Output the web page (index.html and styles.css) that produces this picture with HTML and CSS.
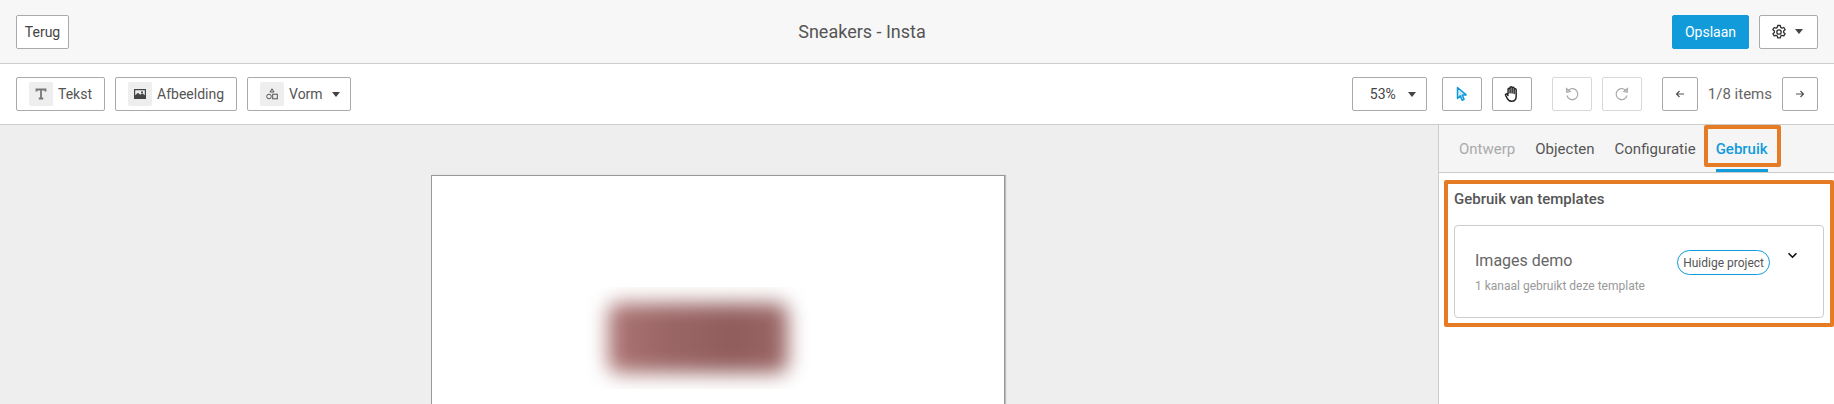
FILE: index.html
```html
<!DOCTYPE html>
<html lang="nl">
<head>
  <meta charset="UTF-8">
  <title>Sneakers - Insta</title>
  <link rel="stylesheet" href="styles.css">
</head>
<body>
  <header class="topbar">
    <button class="btn btn-back">Terug</button>
    <div class="page-title">Sneakers - Insta</div>
    <div class="topbar-right">
      <button class="btn btn-primary">Opslaan</button>
      <button class="btn btn-settings">
        <svg class="icon" width="16" height="16" viewBox="0 0 16 16" fill="none" stroke="#333" stroke-width="1.300" stroke-linejoin="round"><path d="M6.700 1.500h2.600l.4 1.900 1.200.7 1.900-.6 1.300 2.200-1.500 1.300v1.400l1.500 1.300-1.300 2.200-1.900-.6-1.200.7-.4 1.900H6.700l-.4-1.900-1.200-.7-1.900.6-1.300-2.200 1.500-1.300V7L1.900 5.700l1.300-2.200 1.900.6 1.200-.7z"/><circle cx="8" cy="8" r="2.200"/></svg>
        <span class="caret"></span>
      </button>
    </div>
  </header>

  <div class="toolbar">
    <div class="tool-group">
      <button class="btn btn-tool">
        <span class="tool-icon"><svg width="12" height="12" viewBox="0 0 12 12" fill="none" stroke="#777" stroke-width="1.800"><path d="M1.500 3.500V1.500h9v2M6 1.500v9M3.800 10.500h4.400"/></svg></span>Tekst
      </button>
      <button class="btn btn-tool">
        <span class="tool-icon"><svg width="12" height="12" viewBox="0 0 12 12"><path fill="#444" fill-rule="evenodd" d="M0 1h12v10H0zM1.200 2.200v5l2.800-2.400 2.200 2 2-1.600 2.600 2V2.200zM8 3.200a1 1 0 1 1 0 2 1 1 0 0 1 0-2z"/></svg></span>Afbeelding
      </button>
      <button class="btn btn-tool btn-tool-menu">
        <span class="tool-icon"><svg width="12" height="12" viewBox="0 0 12 12" fill="none" stroke="#555" stroke-width="1"><path d="M6 .8l2 3.200H4z"/><circle cx="3" cy="8.500" r="2.300"/><rect x="6.700" y="6.200" width="4.600" height="4.600"/></svg></span>Vorm<span class="caret caret-gap"></span>
      </button>
    </div>
    <div class="tool-group">
      <button class="btn btn-zoom">53%<span class="caret"></span></button>
      <button class="btn btn-square gap-small">
        <svg width="14" height="16" viewBox="0 0 14 16" fill="#cfeaf7" stroke="#129bdb" stroke-width="1.500" stroke-linejoin="round"><path d="M2.500 1.500v11l2.800-2.600 1.800 4.300 2-.9-1.800-4.200 3.900-.2z"/></svg>
      </button>
      <button class="btn btn-square">
        <svg width="18" height="18" viewBox="0 0 16 16" fill="none" stroke="#222" stroke-width="1.300" stroke-linecap="round" stroke-linejoin="round"><path d="M4.500 8V3.800a.9.900 0 0 1 1.800 0V7M6.300 7V2.500a.9.900 0 0 1 1.800 0V7M8.100 7V2.800a.9.900 0 0 1 1.800 0V7M9.900 7.500V4.200a.9.900 0 0 1 1.800 0V10c0 2.800-1.600 4.500-4 4.500-2 0-3-1-3.800-2.400L2.300 9.200c-.5-1 .8-1.800 1.500-.9l.7 1"/></svg>
      </button>
      <button class="btn btn-square btn-disabled gap-large">
        <svg width="16" height="16" viewBox="0 0 16 16" fill="none" stroke="#aaa" stroke-width="1.200"><path d="M4.500 4.200A5.500 5.500 0 1 1 3 9.500"/><path fill="#ddd" d="M2.500 2.500l.3 3.800 3.400-.8z"/></svg>
      </button>
      <button class="btn btn-square btn-disabled">
        <svg width="16" height="16" viewBox="0 0 16 16" fill="none" stroke="#aaa" stroke-width="1.200"><path d="M11.500 4.200A5.500 5.500 0 1 0 13 9.500"/><path fill="#ddd" d="M13.500 2.500l-.3 3.800-3.400-.8z"/></svg>
      </button>
      <button class="btn btn-arrow gap-large">
        <svg width="10" height="10" viewBox="0 0 10 10" fill="none" stroke="#555" stroke-width="1.200"><path d="M9 5H1.500M4.500 2l-3 3 3 3"/></svg>
      </button>
      <span class="item-count">1/8 items</span>
      <button class="btn btn-arrow">
        <svg width="10" height="10" viewBox="0 0 10 10" fill="none" stroke="#555" stroke-width="1.200"><path d="M1 5h7.500M5.500 2l3 3-3 3"/></svg>
      </button>
    </div>
  </div>

  <main class="workspace">
    <div class="canvas-area">
      <div class="canvas">
        <div class="blur-box">
          <div class="blur-shape"></div>
        </div>
      </div>
    </div>
    <aside class="panel">
      <nav class="tabs">
        <span class="tab tab-muted">Ontwerp</span>
        <span class="tab">Objecten</span>
        <span class="tab">Configuratie</span>
        <span class="tab tab-active">Gebruik</span>
      </nav>
      <section class="usage">
        <h2 class="usage-title">Gebruik van templates</h2>
        <div class="usage-card">
          <div class="usage-info">
            <div class="usage-name">Images demo</div>
            <div class="usage-sub">1 kanaal gebruikt deze template</div>
          </div>
          <span class="pill">Huidige project</span>
          <svg class="chevron" width="11" height="7" viewBox="0 0 12 8" fill="none" stroke="#111" stroke-width="1.800"><path d="M1.500 1.500L6 6l4.500-4.500"/></svg>
        </div>
      </section>
      <div class="highlight highlight-tab"></div>
      <div class="highlight highlight-usage"></div>
    </aside>
  </main>
</body>
</html>
```

FILE: styles.css
```css
* { margin:0; padding:0; box-sizing:border-box; }
html, body { height:100%; overflow:hidden; }
body {
  font-family: Roboto, "Liberation Sans", sans-serif;
  font-size:14px;
  color:#555;
  background:#fff;
  display:flex;
  flex-direction:column;
}

.btn {
  display:inline-flex; align-items:center; justify-content:center;
  height:34px;
  flex-shrink:0;
  background:#fff;
  border:1px solid #aaa;
  border-radius:2px;
  font-family:inherit;
  font-size:14px;
  color:#444;
}
.caret {
  width:0; height:0;
  border-left:4px solid transparent;
  border-right:4px solid transparent;
  border-top:5px solid #444;
}

/* barre du haut */
.topbar {
  height:64px;
  flex-shrink:0;
  display:flex; align-items:center;
  padding:0 16px;
  background:#f7f7f7;
  border-bottom:1px solid #ccc;
}
.btn-back { width:53px; }
.page-title {
  flex:1;
  padding-right:17px;
  text-align:center;
  font-size:18px;
  color:#555;
}
.topbar-right { display:flex; gap:10px; }
.btn-primary {
  width:77px;
  background:#129bdb;
  border-color:#129bdb;
  color:#fff;
}
.btn-settings { width:59px; gap:8px; padding-right:3px; }

/* barre d'outils */
.toolbar {
  height:61px;
  flex-shrink:0;
  display:flex; align-items:center; justify-content:space-between;
  padding:0 16px;
  border-bottom:1px solid #ccc;
}
.tool-group { display:flex; align-items:center; gap:10px; }
.btn-tool { padding:0 12px; gap:5px; color:#555; }
.btn-tool-menu { padding-right:10px; }
.tool-icon {
  width:24px; height:24px;
  display:flex; align-items:center; justify-content:center;
  background:#eee;
  border-radius:2px;
}
.caret-gap { margin-left:4px; }
.btn-zoom { width:75px; justify-content:flex-start; gap:12px; padding-left:17px; }
.btn-square { width:40px; }
.btn-disabled { border-color:#d8d8d8; }
.gap-small { margin-left:5px; }
.gap-large { margin-left:10px; }
.btn-arrow { width:36px; }
.item-count { font-size:15px; color:#666; white-space:nowrap; }

/* zone de travail */
.workspace { flex:1; display:flex; min-height:0; }
.canvas-area {
  flex:1;
  background:#eee;
  padding-top:50px;
  display:flex; justify-content:center;
  overflow:hidden;
}
.canvas {
  width:574px; height:400px;
  margin-right:3px;
  flex-shrink:0;
  background:#fff;
  border:1px solid #999;
  box-shadow:1px 0 1px #bbb;
  display:flex; justify-content:center; align-items:flex-start;
  padding:111px 36px 0 0;
}
.blur-box {
  width:230px; height:102px;
  display:flex; align-items:center; justify-content:center;
  overflow:hidden;
}
.blur-shape {
  width:180px; height:70px;
  margin-right:3px;
  background:linear-gradient(90deg, #ae7676 0%, #9c6666 30%, #915c5c 70%, #9c6666 100%);
  border-radius:10px;
  filter:blur(10px);
}

/* panneau de droite */
.panel {
  width:396px;
  flex-shrink:0;
  position:relative;
  border-left:1px solid #ccc;
  background:#fff;
}
.tabs {
  height:48px;
  display:flex;
  gap:20px;
  padding-left:20px;
  background:#f5f5f5;
  border-bottom:1px solid #ccc;
}
.tab {
  display:flex; align-items:center;
  height:47px;
  font-size:15px;
  color:#555;
}
.tab-muted { color:#aaa; }
.tab-active {
  color:#129bdb;
  font-weight:500;
  box-shadow:inset 0 -3px #129bdb;
}
.usage { padding:16px 10px 0 15px; }
.usage-title {
  font-size:15px;
  font-weight:500;
  color:#555;
  line-height:20px;
  margin-bottom:16px;
}
.usage-card {
  height:93px;
  display:flex; align-items:flex-start;
  padding:24px 25px 0 20px;
  border:1px solid #ccc;
  border-radius:4px;
}
.usage-info { flex:1; padding-top:1px; }
.usage-name { font-size:16px; line-height:20px; color:#666; }
.usage-sub { font-size:12px; line-height:16px; color:#999; margin-top:7px; }
.pill {
  height:25px;
  padding:0 5px;
  display:flex; align-items:center;
  font-size:12px;
  color:#555;
  border:1px solid #129bdb;
  border-radius:13px;
}
.chevron { margin-left:17px; margin-top:2px; }

/* cadres orange de l'annotation */
.highlight {
  position:absolute;
  border:4px solid #e57b25;
  border-radius:2px;
  pointer-events:none;
}
.highlight-tab { left:265px; top:0; width:77px; height:42px; }
.highlight-usage { left:5px; top:55px; width:390px; height:147px; }
```
